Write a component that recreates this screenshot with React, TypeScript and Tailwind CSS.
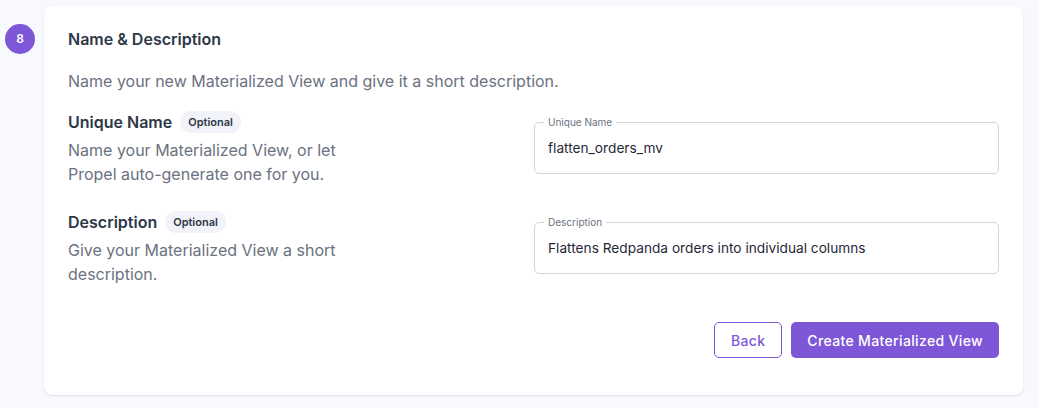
import React from 'react';

function Field({ label, value }: { label: string; value: string }) {
  return (
    <div className="relative mt-3 w-[465px] h-[52px] rounded-[5px] border border-[#d1d5db] bg-white">
      <span className="absolute -top-[7px] left-[9px] bg-white px-1 text-[10px] leading-[12px] text-[#6b7280]">
        {label}
      </span>
      <div className="flex h-full items-center px-[13px] text-[13.7px] text-[#1f2937]">{value}</div>
    </div>
  );
}

function Row({ title, desc, label, value }: { title: string; desc: string; label: string; value: string }) {
  return (
    <div className="flex justify-between">
      <div className="w-[300px]">
        <div className="flex items-center gap-2 h-6">
          <span className="text-[16px] font-semibold text-[#2d3748]">{title}</span>
          <span className="rounded-full bg-[#f1f3f9] px-2 py-[3px] text-[11px] font-semibold leading-[16px] text-[#2d3748]">
            Optional
          </span>
        </div>
        <p className="mt-1 text-[16px] leading-6 text-[#6b7280]">{desc}</p>
      </div>
      <Field label={label} value={value} />
    </div>
  );
}

export default function App() {
  return (
    <div className="min-h-screen bg-[#f8f9fc] pt-[6px] pr-4" style={{ fontFamily: 'Inter, "Noto Sans", sans-serif' }}>
      <div className="flex">
        <div className="w-[44px] shrink-0 pt-[18px] pl-[5px]">
          <div className="flex h-[30px] w-[30px] items-center justify-center rounded-full bg-[#7e56d8] text-[12px] font-semibold text-white">
            8
          </div>
        </div>
        <div className="w-[979px] rounded-lg bg-white px-6 pt-[21px] pb-[37px] shadow-[0_1px_2px_rgba(0,0,0,0.12)]">
          <h2 className="h-6 text-[16px] font-semibold leading-6 text-[#2d3748]">Name &amp; Description</h2>
          <p className="mt-[18px] text-[16px] leading-6 text-[#6b7280]">
            Name your new Materialized View and give it a short description.
          </p>
          <div className="mt-[17px] flex flex-col gap-6">
            <Row
              title="Unique Name"
              desc="Name your Materialized View, or let Propel auto-generate one for you."
              label="Unique Name"
              value="flatten_orders_mv"
            />
            <Row
              title="Description"
              desc="Give your Materialized View a short description."
              label="Description"
              value="Flattens Redpanda orders into individual columns"
            />
          </div>
          <div className="mt-[36px] flex justify-end gap-[9px]">
            <button className="h-9 rounded-[5px] border border-[#7e56d8] bg-white px-4 text-[14px] font-medium tracking-wide text-[#7e56d8]">
              Back
            </button>
            <button className="h-9 rounded-[5px] bg-[#7e56d8] px-4 text-[14px] font-medium tracking-wide text-white">
              Create Materialized View
            </button>
          </div>
        </div>
      </div>
    </div>
  );
}
